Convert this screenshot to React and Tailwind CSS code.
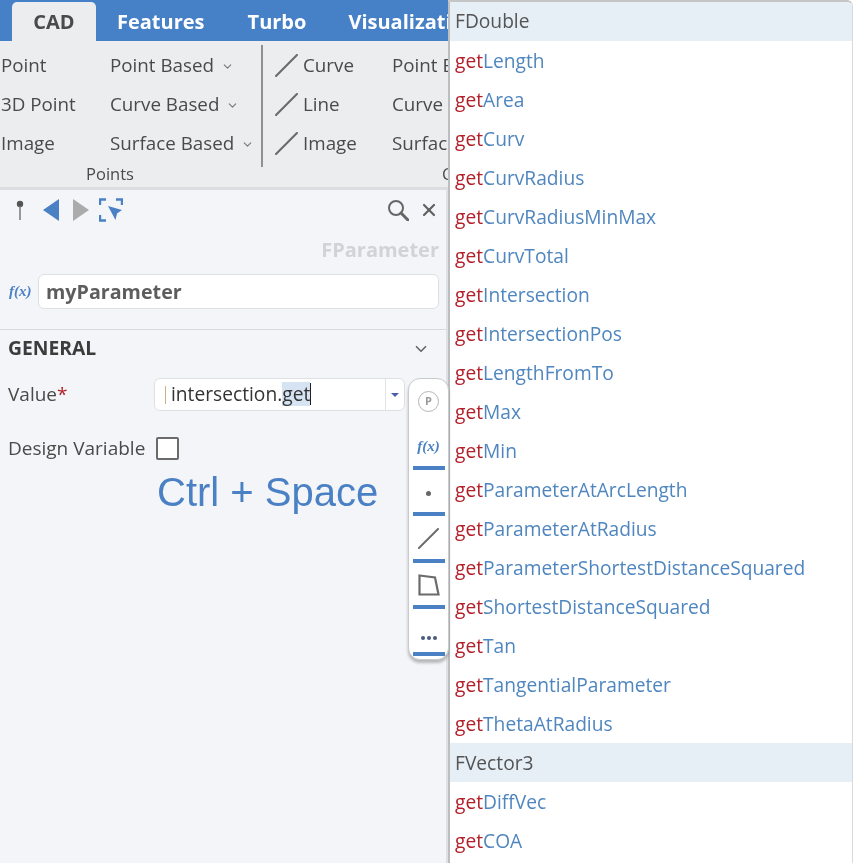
import React from 'react';
import { ChevronDown, X } from 'lucide-react';

const font = { fontFamily: '"Open Sans", sans-serif' };

const pointTools = ['Point', '3D Point', 'Image'];
const pointMenus = ['Point Based', 'Curve Based', 'Surface Based'];
const curveTools = ['Curve', 'Line', 'Image'];
const curveMenus = ['Point Based', 'Curve Based', 'Surface Based'];

const rows = [
  { head: 'FDouble' },
  { name: 'Length' },
  { name: 'Area' },
  { name: 'Curv' },
  { name: 'CurvRadius' },
  { name: 'CurvRadiusMinMax' },
  { name: 'CurvTotal' },
  { name: 'Intersection' },
  { name: 'IntersectionPos' },
  { name: 'LengthFromTo' },
  { name: 'Max' },
  { name: 'Min' },
  { name: 'ParameterAtArcLength' },
  { name: 'ParameterAtRadius' },
  { name: 'ParameterShortestDistanceSquared' },
  { name: 'ShortestDistanceSquared' },
  { name: 'Tan' },
  { name: 'TangentialParameter' },
  { name: 'ThetaAtRadius' },
  { head: 'FVector3' },
  { name: 'DiffVec' },
  { name: 'COA' },
];

function LineIcon({ className }) {
  return (
    <svg viewBox="0 0 22 22" className={className} fill="none">
      <path d="M1 21 L21 1" stroke="#6b6b6b" strokeWidth="2" strokeLinecap="round" />
    </svg>
  );
}

function Ribbon() {
  return (
    <div className="flex h-[149px] shrink-0 bg-[#ecedef] border-b-[3px] border-[#dcdde0] text-[18.8px] text-[#4a4a4a]">
      <div className="w-[261px] shrink-0 flex flex-col">
        <div className="flex pt-[5px]">
          <div className="w-[110px] pl-[1px]">
            {pointTools.map((t) => (
              <div key={t} className="h-[39px] flex items-center">{t}</div>
            ))}
          </div>
          <div>
            {pointMenus.map((t) => (
              <div key={t} className="h-[39px] flex items-center gap-[7px]">
                {t}
                <ChevronDown size={13} strokeWidth={2} className="text-[#777] mt-[1px]" />
              </div>
            ))}
          </div>
        </div>
        <div className="text-[16.5px] text-center w-[220px] mt-[2px] leading-[18px]">Points</div>
      </div>
      <div className="w-[2px] h-[122px] mt-[4px] bg-[#8f9092] shrink-0" />
      <div className="flex flex-col pt-[5px] pl-[12px] grow">
        <div className="flex">
          <div className="w-[117px]">
            {curveTools.map((t) => (
              <div key={t} className="h-[39px] flex items-center gap-[5px]">
                <LineIcon className="w-[23px] h-[23px]" />
                <span>{t}</span>
              </div>
            ))}
          </div>
          <div>
            {curveMenus.map((t) => (
              <div key={t} className="h-[39px] flex items-center">{t}</div>
            ))}
          </div>
        </div>
        <div className="text-[16.5px] mt-[2px] leading-[18px] pl-[167px]">Curves</div>
      </div>
    </div>
  );
}

function PanelToolbar() {
  return (
    <div className="flex items-center h-[40px] pl-[13px] pr-[7px]">
      <svg viewBox="0 0 14 24" className="w-[14px] h-[24px] mr-[16px]">
        <circle cx="7" cy="6" r="3.2" fill="#555" />
        <path d="M7 8 V22" stroke="#777" strokeWidth="1.5" />
      </svg>
      <svg viewBox="0 0 16 22" className="w-[16px] h-[22px] mr-[14px]">
        <path d="M16 0 V22 L0 11 Z" fill="#4a80c4" />
      </svg>
      <svg viewBox="0 0 16 22" className="w-[16px] h-[22px] mr-[10px]">
        <path d="M0 0 V22 L16 11 Z" fill="#ababab" />
      </svg>
      <svg viewBox="0 0 24 24" className="w-[24px] h-[24px]" fill="none">
        <path d="M1 7 V1.5 H7 M17 1.5 H23 V7 M1 17 V22.5 H7" stroke="#4a80c4" strokeWidth="2.4" />
        <path d="M9 8 L23 12 L18 15.5 L16.5 22 Z" fill="#4a80c4" />
      </svg>
      <svg viewBox="0 0 22 22" className="ml-auto w-[22px] h-[22px]" fill="none">
        <circle cx="9" cy="9" r="7" stroke="#666" strokeWidth="2" />
        <path d="M14 14 L21 21" stroke="#666" strokeWidth="3" strokeLinecap="round" />
      </svg>
      <X size={20} strokeWidth={2.6} className="ml-[10px] text-[#5f5f5f]" />
    </div>
  );
}

function Toolbox() {
  const bar = 'h-[4px] w-[32px] bg-[#4a80c4]';
  const cell = 'h-[46.5px] flex flex-col items-center justify-end';
  return (
    <div className="absolute left-[408px] top-[378px] w-[41px] h-[282px] bg-white border border-[#c9cacc] rounded-[12px] shadow-[0_3px_3px_rgba(0,0,0,0.25)] flex flex-col items-center pt-[12px]">
      <div className="h-[32px] flex items-start">
        <div className="w-[21px] h-[21px] rounded-full border border-[#b5b5b5] text-[#9a9a9a] text-[11px] font-bold flex items-center justify-center">P</div>
      </div>
      <div className={cell}>
        <div className="grow flex items-center pt-[4px] italic font-bold text-[15px] text-[#4a80c4]" style={{ fontFamily: '"Liberation Serif", serif' }}>f(x)</div>
        <div className={bar} />
      </div>
      <div className={cell}>
        <div className="grow flex items-center pt-[6px]"><div className="w-[5px] h-[5px] rounded-full bg-[#666]" /></div>
        <div className={bar} />
      </div>
      <div className={cell}>
        <div className="grow flex items-center pt-[3px]"><LineIcon className="w-[21px] h-[21px]" /></div>
        <div className={bar} />
      </div>
      <div className={cell}>
        <div className="grow flex items-center pt-[2px]">
          <svg viewBox="0 0 22 22" className="w-[22px] h-[22px]" fill="none">
            <path d="M1.5 1.5 L17 3.5 L20.5 20.5 H1.5 Z" stroke="#6b6b6b" strokeWidth="2.2" />
          </svg>
        </div>
        <div className={bar} />
      </div>
      <div className={cell}>
        <div className="grow flex items-center gap-[2px] pt-[15px]">
          <div className="w-[4px] h-[4px] rounded-full bg-[#4a5a80]" />
          <div className="w-[4px] h-[4px] rounded-full bg-[#4a5a80]" />
          <div className="w-[4px] h-[4px] rounded-full bg-[#4a5a80]" />
        </div>
        <div className={bar} />
      </div>
    </div>
  );
}

function Panel() {
  return (
    <div className="grow bg-[#f4f5f8] border-r-[2px] border-[#dfe0e3]">
      <PanelToolbar />
      <div className="text-right pr-[7px] mt-[8px] text-[20px] font-bold text-[#d3d3d5] leading-[24px]">FParameter</div>
      <div className="flex items-center mt-[12px] pl-[9px] pr-[7px]">
        <span className="w-[29px] italic font-bold text-[15px] text-[#4a80c4]" style={{ fontFamily: '"Liberation Serif", serif' }}>f(x)</span>
        <div className="grow h-[35px] bg-white border border-[#dfe0e3] rounded-[6px] pl-[7px] flex items-center font-bold text-[19.7px] text-[#5d5d5d]">myParameter</div>
      </div>
      <div className="mt-[20px] h-[36px] border-t border-[#d9dadd] flex items-center justify-between pl-[8px] pr-[16px] pt-[2px]">
        <span className="font-bold text-[19.3px] text-[#3c3c3c]">GENERAL</span>
        <ChevronDown size={18} strokeWidth={2.2} className="text-[#666]" />
      </div>
      <div className="flex items-center mt-[13px] pl-[8px] h-[33px]">
        <span className="w-[146px] text-[19px] text-[#4a4a4a] pb-[1px]">Value<span className="text-[#b3202a]">*</span></span>
        <div className="w-[251px] h-[33px] bg-white border border-[#dfe0e3] rounded-[6px] flex items-center">
          <div className="w-[1px] h-[18px] bg-[#c9b08a] ml-[10px] mr-[5px]" />
          <div className="grow flex items-center text-[19.2px] text-[#333] leading-[24px] pb-[2px]">
            <span>intersection.</span><span className="bg-[#d5e3f2]">get</span>
            <span className="w-[1px] h-[22px] bg-[#222]" />
          </div>
          <div className="w-[19px] h-full border-l border-[#e2e3e5] flex items-center justify-center">
            <div className="w-0 h-0 border-x-[4px] border-x-transparent border-t-[4px] border-t-[#4a5fb0]" />
          </div>
        </div>
      </div>
      <div className="flex items-center mt-[25px] pl-[8px] h-[24px]">
        <span className="w-[148px] text-[19px] text-[#4a4a4a]">Design Variable</span>
        <div className="w-[23px] h-[23px] bg-white border-[2px] border-[#6b6b6b] rounded-[2px]" />
      </div>
      <div className="mt-[9px] pl-[157px] text-[40px] leading-[46px] text-[#4a80c4]" style={{ fontFamily: '"Liberation Sans", sans-serif' }}>Ctrl + Space</div>
    </div>
  );
}

function Completions() {
  return (
    <div className="w-[405px] shrink-0 bg-white border-l-[2px] border-[#bdbec0] border-t-[2px] border-t-[#c4c5c7] border-r border-r-[#d8d9db] rounded-tr-[6px] mr-[1px] overflow-hidden whitespace-nowrap">
      {rows.map((r, i) =>
        r.head ? (
          <div key={r.head} className={i > 0 ? 'h-[39px] bg-[#e6eef6] flex items-center pl-[5px] pt-[2px] text-[19.2px] text-[#555]' : 'h-[39px] bg-[#e6eef6] flex items-center pl-[5px] text-[19.2px] text-[#555]'}>{r.head}</div>
        ) : (
          <div key={r.name} className="h-[39px] flex items-center pl-[5px] pt-[1px] text-[19.2px] text-[#4f86bf]">
            <span className="text-[#b3202a]">get</span><span>{r.name}</span>
          </div>
        )
      )}
    </div>
  );
}

export default function App() {
  return (
    <div className="relative w-[854px] h-[863px] flex overflow-hidden bg-white blur-[0.35px]" style={font}>
      <div className="w-[448px] shrink-0 flex flex-col overflow-hidden whitespace-nowrap">
        <div className="h-[41px] shrink-0 bg-[#4680c6] flex items-end pl-[12px] text-[20px] font-bold text-white">
          <div className="w-[84px] h-[39px] shrink-0 bg-[#ecedef] rounded-t-[5px] text-[#4a4a4a] flex items-center justify-center">CAD</div>
          <div className="h-[39px] shrink-0 flex items-center ml-[21px]">Features</div>
          <div className="h-[39px] shrink-0 flex items-center ml-[43px]">Turbo</div>
          <div className="h-[39px] shrink-0 flex items-center ml-[42px]">Visualization</div>
        </div>
        <Ribbon />
        <Panel />
      </div>
      <Completions />
      <Toolbox />
    </div>
  );
}
